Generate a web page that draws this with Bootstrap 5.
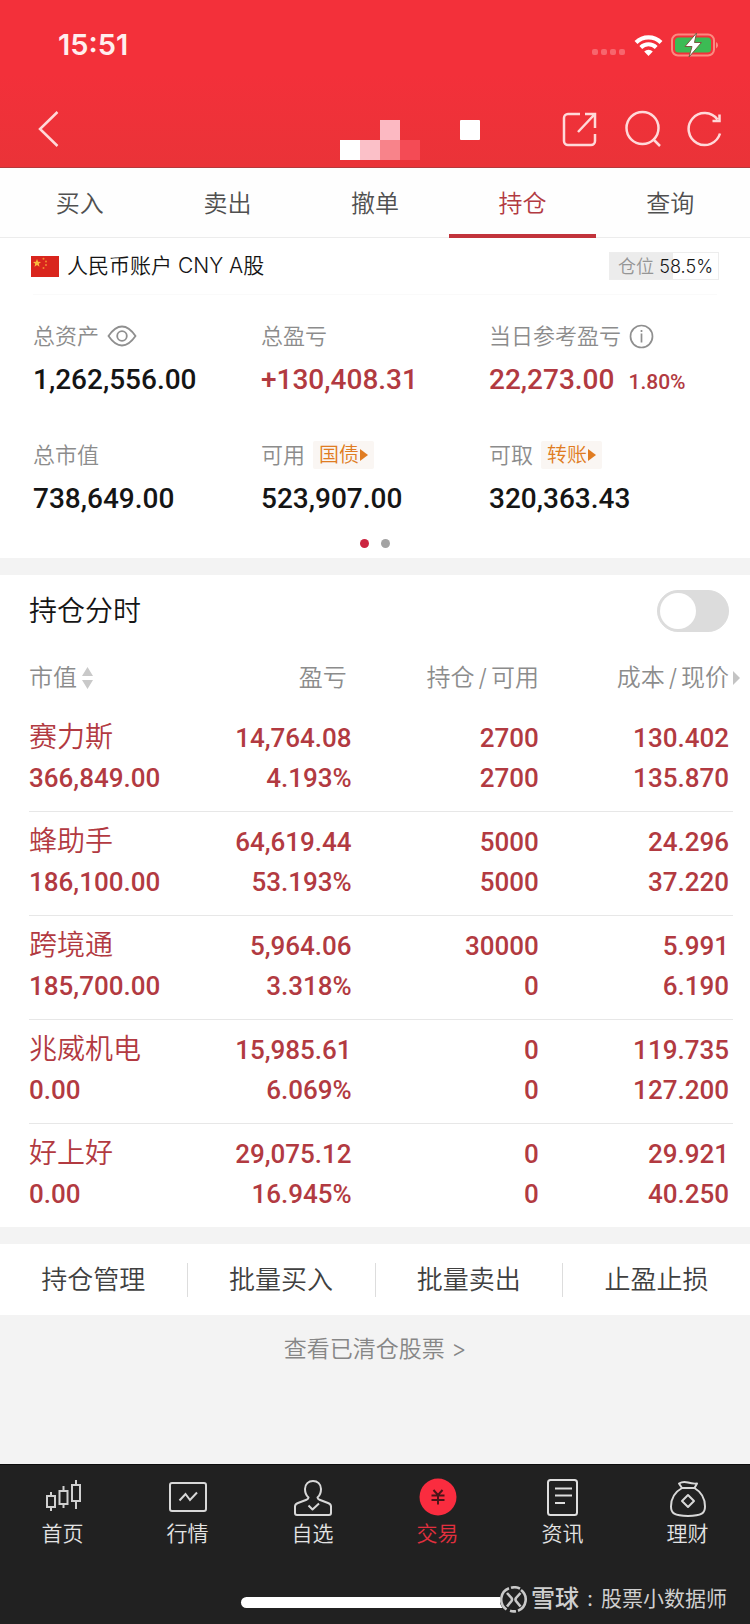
<!DOCTYPE html>
<html lang="zh-CN">
<head>
<meta charset="utf-8">
<meta name="viewport" content="width=device-width, initial-scale=1">
<title>持仓</title>
<link href="https://cdn.jsdelivr.net/npm/bootstrap@5.3.0/dist/css/bootstrap.min.css" rel="stylesheet">
<style>
  :root { --up: #b23a41; --grey: #8c8c8c; --strip: #f3f3f3; }
  body { font-family: "Inter", "Noto Sans CJK SC", sans-serif; font-weight: 350; color: #151515; background: var(--strip); line-height: 1.5; }
  a, button { font-weight: inherit; }
  svg { display: block; flex: none; }
  .figure-num { font-family: "Roboto", "Noto Sans CJK SC", sans-serif; font-weight: 500; }
  .up { color: var(--up); }

  .app-head { background: linear-gradient(#f3303a 45%, #ea3338); border-bottom: 1px solid #b5393c; color: #fff; }
  .status-row { height: 90px; padding: 0 31px 0 58px; }
  .clock { font-size: 29px; font-weight: 600; line-height: 40px; color: #ffeeee; }
  .title-row { height: 77px; padding: 0 28px 0 36px; }
  .title-actions { gap: 26px; }
  .icon-btn { border: 0; background: none; padding: 0; color: #ffd9d9; }
  .mosaic { left: 0; right: 0; top: 30px; padding-left: 70px; pointer-events: none; }

  .trade-tabs { padding: 0 6px; height: 70px; border-bottom: 1px solid #ececec; background: #fefefe; }
  .trade-tabs .nav-link { font-size: 24px; color: #505050; height: 70px; padding: 16px 0; line-height: 40px; border-bottom: 4px solid transparent; }
  .trade-tabs .nav-link.active { color: var(--up); border-bottom-color: #c2333b; }

  .acct-row { height: 56px; padding: 0 31px; font-size: 21px; }
  .position-tag { height: 28px; width: 110px; padding: 0 5px 0 8px; font-size: 18px; border: 1px solid #ededed; }
  .position-tag span { color: #959595; }
  .faint-rule { margin: 0 33px; border-top: 1px solid #fafafa; }

  .sum-grid { padding: 20px 33px 0; row-gap: 31px; }
  .sum-label { height: 42px; font-size: 22px; color: var(--grey); }
  .sum-value { height: 46px; font-size: 28px; line-height: 46px; }
  .sum-value small { font-size: 21px; margin-left: 14px; }
  .mini-btn { font-size: 20px; line-height: 28px; padding: 0 6px; border: 0; border-radius: 2px; color: #e07c22; background: #faf6f3; }
  .pager { height: 36px; padding-top: 6px; gap: 12px; }
  .pager i { width: 9px; height: 9px; border-radius: 50%; background: #a3a3a3; }
  .pager i.on { background: #cc2540; }

  .block-gap { height: 17px; background: var(--strip); }
  .minute-row { height: 72px; padding: 0 21px 0 29px; }
  .minute-row label { font-size: 28px; }
  .minute-row .form-switch { padding: 0; min-height: 0; }
  .minute-row .form-check-input { width: 72px; height: 42px; margin: 0; border-color: #dcdcdc; background-color: #dcdcdc;
    background-image: url("data:image/svg+xml,%3csvg xmlns='http://www.w3.org/2000/svg' viewBox='-4 -4 8 8'%3e%3ccircle r='3.6' fill='%23fff'/%3e%3c/svg%3e"); }

  .hold-wrap { padding: 0 17px 0 29px; }
  .hold { table-layout: fixed; margin: 0; --bs-table-bg: transparent; }
  .hold th { font-weight: 350; font-size: 24px; line-height: 40px; color: var(--grey); padding: 11px 4px 10px 0; border: 0; }
  .hold td { font-size: 26px; line-height: 40px; color: var(--up); padding: 10px 4px 13px 0; border-bottom: 1px solid #e7e7e7; white-space: nowrap; }
  .hold td:first-child, .hold th:first-child { padding-right: 0; }
  .hold th.c2 { padding-right: 9px; }
  .hold tr:last-child td { border-bottom: 0; }
  .hold .stock { font-size: 28px; font-weight: 350; }
  .c1 { width: 23%; } .c2 { width: 23.4%; } .c3 { width: 26.6%; }
  .sort-btn { border: 0; background: none; padding: 0; color: inherit; }
  .more-arrow { right: -7px; top: 24px; }

  .action-row { height: 71px; }
  .action-row button { flex: 1; border: 0; background: none; font-size: 26px; color: #404040; line-height: 34px; padding: 0; }
  .action-row button + button { border-left: 1px solid #dddddd; }
  .cleared { font-size: 23px; color: #868686; padding: 17px 0; }

  .tabbar { background: #212121; border-top: 1px solid #0c0c0c; }
  .tabbar a { color: #e3e3e3; font-size: 21px; line-height: 32px; padding-top: 13px; height: 116px; }
  .tabbar a.active { color: #e2303f; }
  .home-zone { height: 43px; padding: 0 23px 0 241px; }
  .home-bar { width: 269px; height: 11px; border-radius: 6px; background: #fff; }
  .credit { right: 23px; top: 2px; color: #cfcfcf; font-size: 21px; line-height: 32px; font-weight: 400; }
  .credit b { font-size: 24px; font-weight: 500; }
</style>
</head>
<body class="d-flex flex-column min-vh-100">
<header class="app-head">
  <div class="status-row d-flex align-items-center justify-content-between">
    <div class="clock">15:51</div>
    <div class="d-flex align-items-center gap-2">
      <svg width="34" height="24" viewBox="0 0 34 24" fill="#f7666d"><rect y="16" width="6" height="6" rx="2"/><rect x="9" y="16" width="6" height="6" rx="2"/><rect x="18" y="16" width="6" height="6" rx="2"/><rect x="27" y="16" width="6" height="6" rx="2"/></svg>
      <svg width="29" height="23" viewBox="0 0 29 23" fill="none" stroke="#fff"><path d="M2 8.500a18 18 0 0 1 25 0" stroke-width="4.200"/><path d="M6.800 13.500a11 11 0 0 1 15.400 0" stroke-width="4"/><path d="M14.500 22l-4.300-4.500a6.500 6.500 0 0 1 8.600 0z" fill="#fff" stroke="none"/></svg>
      <svg width="48" height="26" viewBox="0 0 48 26"><rect x="1" y="2.500" width="42" height="21" rx="6" fill="none" stroke="#fb8a80" stroke-width="2"/><rect x="4" y="5.500" width="36" height="15" rx="3.500" fill="#3cbb54"/><path d="M45 10v6.500q2-.8 2-3.200t-2-3.300z" fill="#fb8a80"/><path d="M25.500 1L14 14.500h7L18 25l12.500-14.500h-7z" fill="#fff" stroke="#7a5a40" stroke-width="1"/></svg>
    </div>
  </div>
  <div class="title-row position-relative d-flex align-items-center justify-content-between">
    <button class="icon-btn" aria-label="返回"><svg width="25" height="38" viewBox="0 0 25 38" fill="none" stroke="currentColor" stroke-width="2.500"><path d="M21.500 2L4 19l17.500 17"/></svg></button>
    <div class="mosaic position-absolute d-flex justify-content-center"><svg width="140" height="40" viewBox="0 0 140 40"><path d="M0 20h20v20H0z" fill="#fff"/><path d="M20 20h20v20H20z" fill="#fbc0c8"/><path d="M40 0h20v20H40z" fill="#fcb9c2"/><path d="M40 20h20v20H40z" fill="#f8838a"/><path d="M60 20h20v20H60z" fill="#f44b55"/><rect x="120" width="20" height="20" rx="1" fill="#fff"/></svg></div>
    <div class="title-actions d-flex align-items-center">
      <button class="icon-btn" aria-label="分享"><svg width="36" height="36" viewBox="0 0 36 36" fill="none" stroke="currentColor" stroke-width="2.500"><path d="M18 3H6a4 4 0 0 0-4 4v23a4 4 0 0 0 4 4h23a4 4 0 0 0 4-4V23M33 17V13M16 21L32 4M23 3h10v11"/></svg></button>
      <button class="icon-btn" aria-label="搜索"><svg width="37" height="37" viewBox="0 0 37 37" fill="none" stroke="currentColor" stroke-width="2.500"><circle cx="18.500" cy="18" r="16"/><path d="M29 29l7 7"/></svg></button>
      <button class="icon-btn" aria-label="刷新"><svg width="35" height="36" viewBox="0 0 35 36" fill="none" stroke="currentColor" stroke-width="2.500"><path d="M33 22.500A16 16 0 1 1 30.500 8.500M32.500 3.500v6.500h-7"/></svg></button>
    </div>
  </div>
</header>

<nav class="trade-tabs nav nav-fill flex-nowrap">
  <a class="nav-link col" href="#">买入</a>
  <a class="nav-link col" href="#">卖出</a>
  <a class="nav-link col" href="#">撤单</a>
  <a class="nav-link col active" href="#" aria-current="page">持仓</a>
  <a class="nav-link col" href="#">查询</a>
</nav>

<main class="flex-grow-1">
  <section class="bg-white">
    <div class="acct-row d-flex align-items-center justify-content-between">
      <div class="d-flex align-items-center gap-2">
        <svg width="28" height="21" viewBox="0 0 28 21"><path d="M0 0h28v21H0z" fill="#d9251d"/><path d="M6 3l1.100 2.700 2.900.2-2.200 1.900.7 2.900L6 9.100l-2.500 1.600.7-2.900L2 5.900l2.900-.2z" fill="#f9ba3c"/><g fill="#f08a30"><circle cx="12.500" cy="2.800" r="1"/><circle cx="15" cy="5.500" r="1"/><circle cx="15" cy="9" r="1"/><circle cx="12.500" cy="12" r="1"/></g></svg>
        <span>人民币账户 CNY A股</span>
      </div>
      <div class="position-tag d-flex align-items-center justify-content-between" style="background:linear-gradient(90deg,#ececec 58.5%,#fff 58.5%)"><span>仓位</span>58.5%</div>
    </div>
    <div class="faint-rule"></div>
    <div class="sum-grid row g-0">
      <div class="col-4">
        <div class="sum-label d-flex align-items-center">总资产
          <svg class="ms-2" width="30" height="24" viewBox="0 0 30 24" fill="none" stroke="#8f8f8f" stroke-width="1.800"><path d="M1.500 12Q8 2.500 15 2.500T28.500 12Q22 21.500 15 21.500T1.500 12z"/><circle cx="15" cy="12" r="4.800"/></svg></div>
        <div class="sum-value figure-num">1,262,556.00</div>
      </div>
      <div class="col-4"><div class="sum-label d-flex align-items-center">总盈亏</div><div class="sum-value figure-num up">+130,408.31</div></div>
      <div class="col-4">
        <div class="sum-label d-flex align-items-center text-nowrap">当日参考盈亏
          <svg class="ms-2" width="25" height="25" viewBox="0 0 25 25" fill="none" stroke="#8f8f8f" stroke-width="1.700"><circle cx="12.500" cy="12.500" r="11"/><path d="M12.500 9.500v9M12.500 6v2"/></svg></div>
        <div class="sum-value figure-num up text-nowrap">22,273.00<small>1.80%</small></div>
      </div>
      <div class="col-4"><div class="sum-label d-flex align-items-center">总市值</div><div class="sum-value figure-num">738,649.00</div></div>
      <div class="col-4">
        <div class="sum-label d-flex align-items-center gap-2">可用 <button class="mini-btn d-flex align-items-center">国债<svg width="9" height="12" viewBox="0 0 9 12" fill="#e07c22"><path d="M1 0l8 6-8 6z"/></svg></button></div>
        <div class="sum-value figure-num">523,907.00</div>
      </div>
      <div class="col-4">
        <div class="sum-label d-flex align-items-center gap-2">可取 <button class="mini-btn d-flex align-items-center">转账<svg width="9" height="12" viewBox="0 0 9 12" fill="#e07c22"><path d="M1 0l8 6-8 6z"/></svg></button></div>
        <div class="sum-value figure-num">320,363.43</div>
      </div>
    </div>
    <div class="pager d-flex align-items-center justify-content-center"><i class="on"></i><i></i></div>
  </section>

  <div class="block-gap"></div>

  <section class="bg-white">
    <div class="minute-row d-flex align-items-center justify-content-between">
      <label for="minute">持仓分时</label>
      <div class="form-check form-switch mb-0"><input class="form-check-input float-none d-block" type="checkbox" role="switch" id="minute"></div>
    </div>
    <div class="hold-wrap">
      <table class="table hold">
        <thead>
          <tr>
            <th class="c1" scope="col"><button class="sort-btn d-flex align-items-center">市值<svg class="ms-1" width="13" height="22" viewBox="0 0 13 22" fill="#c9c9c9"><path d="M6.500 0L12 9H1zM6.500 22L12 13H1z"/></svg></button></th>
            <th class="c2 text-end" scope="col">盈亏</th>
            <th class="c3 text-end" scope="col">持仓<span class="mx-1">/</span>可用</th>
            <th class="position-relative text-end" scope="col">成本<span class="mx-1">/</span>现价<svg class="more-arrow position-absolute" width="7" height="14" viewBox="0 0 7 14" fill="#c4c4c4"><path d="M0 0l7 7-7 7z"/></svg></th>
          </tr>
        </thead>
        <tbody class="figure-num">
          <tr><td><span class="stock">赛力斯</span><br>366,849.00</td><td class="text-end">14,764.08<br>4.193%</td><td class="text-end">2700<br>2700</td><td class="text-end">130.402<br>135.870</td></tr>
          <tr><td><span class="stock">蜂助手</span><br>186,100.00</td><td class="text-end">64,619.44<br>53.193%</td><td class="text-end">5000<br>5000</td><td class="text-end">24.296<br>37.220</td></tr>
          <tr><td><span class="stock">跨境通</span><br>185,700.00</td><td class="text-end">5,964.06<br>3.318%</td><td class="text-end">30000<br>0</td><td class="text-end">5.991<br>6.190</td></tr>
          <tr><td><span class="stock">兆威机电</span><br>0.00</td><td class="text-end">15,985.61<br>6.069%</td><td class="text-end">0<br>0</td><td class="text-end">119.735<br>127.200</td></tr>
          <tr><td><span class="stock">好上好</span><br>0.00</td><td class="text-end">29,075.12<br>16.945%</td><td class="text-end">0<br>0</td><td class="text-end">29.921<br>40.250</td></tr>
        </tbody>
      </table>
    </div>
  </section>

  <div class="block-gap"></div>

  <div class="action-row bg-white d-flex align-items-center">
    <button>持仓管理</button><button>批量买入</button><button>批量卖出</button><button>止盈止损</button>
  </div>
  <a class="cleared d-block text-center text-decoration-none" href="#">查看已清仓股票 &gt;</a>
</main>

<footer class="tabbar">
  <nav class="d-flex text-center">
    <a class="col d-flex flex-column align-items-center text-decoration-none" href="#"><svg width="40" height="40" viewBox="2 0 40 40" fill="none" stroke="#d0d0d0" stroke-width="2"><path d="M6 18h8v11H6zM10 14v4m0 11v4M18.500 13h8v13h-8zM22.500 8v5m0 13v4M31 7h8v16h-8zM35 2v5m0 16v8"/></svg>首页</a>
    <a class="col d-flex flex-column align-items-center text-decoration-none" href="#"><svg width="40" height="40" viewBox="0 0 40 40" fill="none" stroke="#d8d8d8" stroke-width="2"><rect x="2" y="5" width="36" height="28" rx="2"/><path d="M11.500 22.500l6-6.500 4.500 6 7-7.500"/></svg>行情</a>
    <a class="col d-flex flex-column align-items-center text-decoration-none" href="#"><svg width="40" height="40" viewBox="0 0 40 40" fill="none" stroke="#d8d8d8" stroke-width="2" stroke-linejoin="round"><path d="M15.500 19.500C12.500 17 12 14 12 11c0-5 3.500-8 8-8s8 3 8 8c0 3-.5 6-3.500 8.500 0 1 .5 1.600 2 2.200l8.500 3.300c2.500 1 3 1.500 3 3.500V35q0 2-2 2H4q-2 0-2-2v-6.500c0-2 .5-2.500 3-3.500l8.500-3.300c1.500-.6 2-1.200 2-2.200z"/><path d="M15.500 27.500l4 4 6.500-6"/></svg>自选</a>
    <a class="col d-flex flex-column align-items-center text-decoration-none active" href="#" aria-current="page"><svg width="40" height="40" viewBox="0 0 40 40"><circle cx="20" cy="19" r="18.500" fill="#fa2c3f"/><path d="M15.500 12l4.500 5 4.500-5M13.500 17.500h13M13.500 22h13M20 17v9.500" fill="none" stroke="#4a1418" stroke-width="2"/></svg>交易</a>
    <a class="col d-flex flex-column align-items-center text-decoration-none" href="#"><svg width="40" height="40" viewBox="0 0 40 40" fill="none" stroke="#dedede" stroke-width="2"><rect x="5" y="2" width="29" height="35" rx="2.500"/><path d="M12 10.500h17M12 17.500h17M12 25h10"/></svg>资讯</a>
    <a class="col d-flex flex-column align-items-center text-decoration-none" href="#"><svg width="40" height="40" viewBox="0 0 40 40" fill="none" stroke="#d8d8d8" stroke-width="2" stroke-linejoin="round"><path d="M14 10l-3-4.500Q15 3 20 4.500T29 5.500L26.500 10z"/><path d="M14 10C6 14.500 3 22 3 28.500c0 6.500 3 9.500 17 9.500s17-3 17-9.500C37 22 34 14.500 26.500 10M20 17l6 6-6 6-6-6z"/></svg>理财</a>
  </nav>
  <div class="home-zone position-relative">
    <div class="pt-3"><div class="home-bar"></div></div>
    <div class="credit position-absolute d-flex align-items-center">
      <svg width="27" height="27" viewBox="0 0 27 27" fill="none" stroke="#c9c9c9" stroke-width="2.600"><circle cx="13.500" cy="13.500" r="14" fill="#212121" stroke="none"/><path d="M9 2.300A12 12 0 0 0 6.500 23.500M11 1.800a12 12 0 0 1 9 .8M18 24.700A12 12 0 0 0 21 4M16 25.200a12 12 0 0 1-6-.4M7 7l4.500 5q1 1.500 0 3L7 20.500M20.500 7L16 12q-1 1.500 0 3l4.500 5.500"/></svg>
      <b class="ms-1">雪球</b><span class="mx-2">:</span><span>股票小数据师</span>
    </div>
  </div>
</footer>
<script src="https://cdn.jsdelivr.net/npm/bootstrap@5.3.0/dist/js/bootstrap.bundle.min.js"></script>
</body>
</html>
